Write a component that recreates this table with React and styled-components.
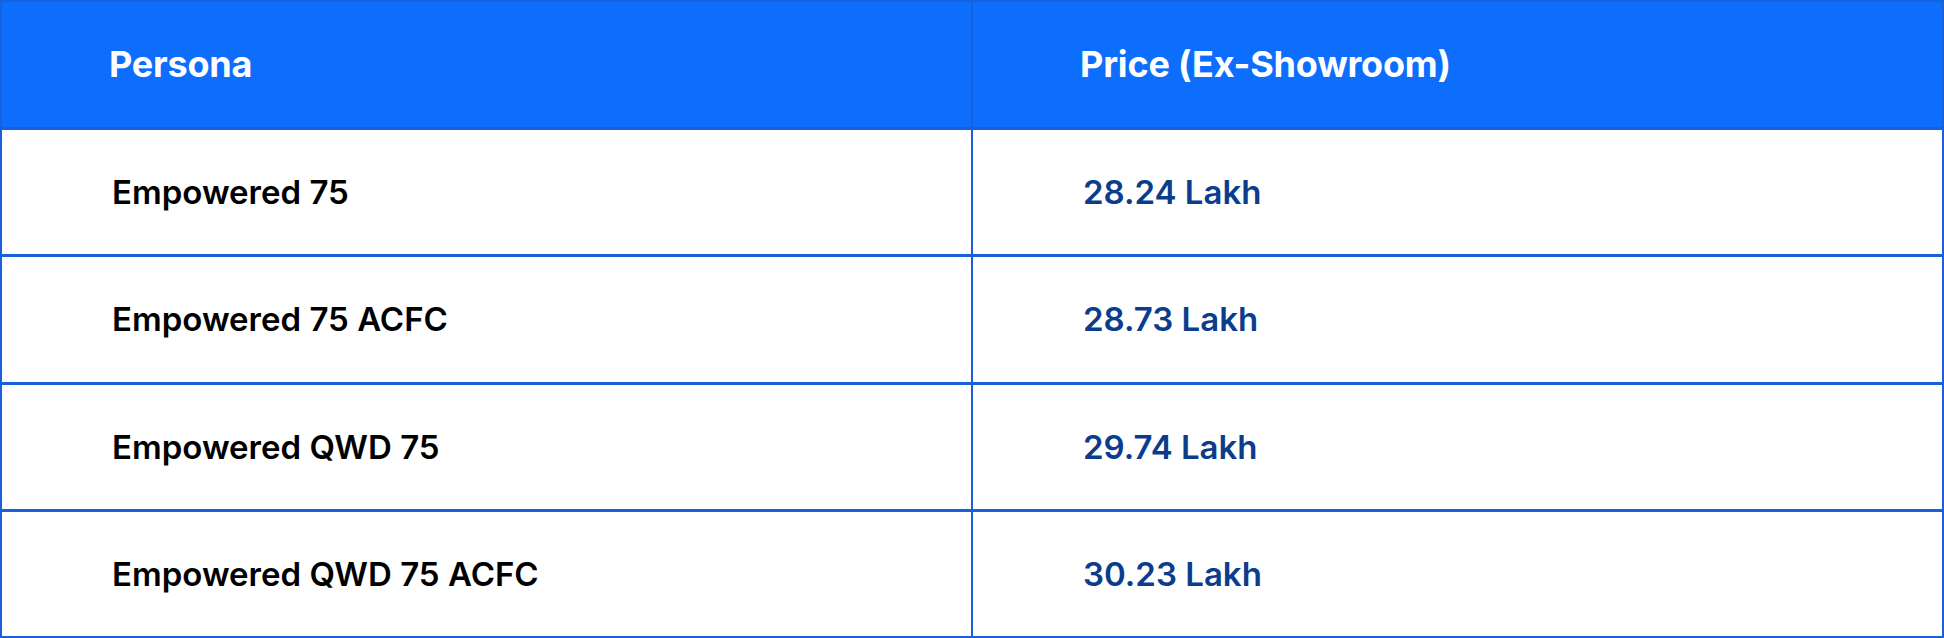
import styled, { createGlobalStyle } from "styled-components";

const GlobalStyle = createGlobalStyle`
  html, body {
    margin: 0;
    padding: 0;
    background: #ffffff;
  }
  body {
    font-family: Inter, "Noto Sans", sans-serif;
  }
`;

const rows = [
  { persona: "Empowered 75", price: "28.24 Lakh" },
  { persona: "Empowered 75 ACFC", price: "28.73 Lakh" },
  { persona: "Empowered QWD 75", price: "29.74 Lakh" },
  { persona: "Empowered QWD 75 ACFC", price: "30.23 Lakh" },
];

const App = () => {
  return (
    <>
      <GlobalStyle />
      <Table>
        <Row>
          <HeadCell>Persona</HeadCell>
          <HeadCell>Price (Ex-Showroom)</HeadCell>
        </Row>
        {rows.map((row) => (
          <Row key={row.persona}>
            <Cell>{row.persona}</Cell>
            <Cell $price>{row.price}</Cell>
          </Row>
        ))}
      </Table>
    </>
  );
};

export default App;

const Table = styled.div`
  width: 1944px;
  height: 638px;
  box-sizing: border-box;
  border: 2px solid #1762d8;
  display: grid;
  grid-template-rows: 125px repeat(4, 1fr);
  gap: 3px;
  background: #1762d8;
`;

const Row = styled.div`
  display: grid;
  grid-template-columns: 1fr 1fr;
  gap: 2px;
  background: #1762d8;
`;

const HeadCell = styled.div`
  display: flex;
  align-items: center;
  padding-left: 107px;
  padding-bottom: 2px;
  background: #0d6efd;
  color: #ffffff;
  font-size: 36px;
  font-weight: 700;
  letter-spacing: -0.2px;
`;

const Cell = styled.div`
  display: flex;
  align-items: center;
  padding-left: 110px;
  background: #ffffff;
  color: ${(p) => (p.$price ? "#0c3d8c" : "#000000")};
  font-size: 33px;
  font-weight: 600;
`;
